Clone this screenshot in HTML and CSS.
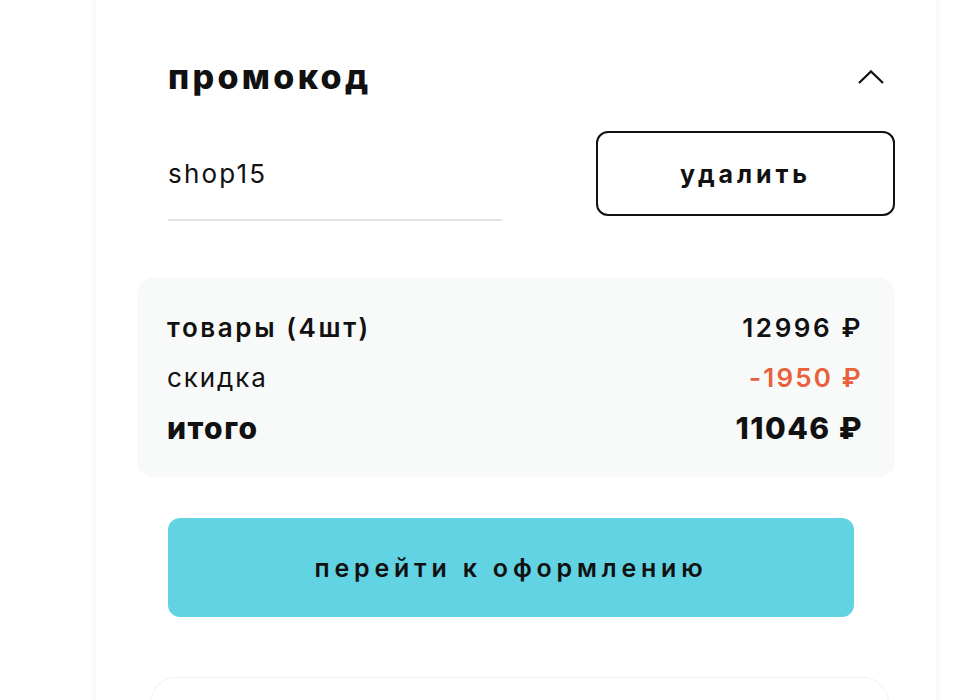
FILE: index.html
```html
<!DOCTYPE html>
<html lang="ru">
<head>
<meta charset="utf-8">
<title>Корзина</title>
<link rel="stylesheet" href="styles.css">
</head>
<body>
<div class="page">
  <section class="card">
    <div class="promo-head">
      <h2 class="promo-title">промокод</h2>
      <svg class="chevron" width="26" height="14" viewBox="0 0 26 14"><polyline points="1,13 13,1.4 25,13" fill="none" stroke="#111" stroke-width="2.2"/></svg>
    </div>
    <div class="promo-row">
      <div class="promo-input">shop15</div>
      <button class="btn-remove">удалить</button>
    </div>
    <div class="summary">
      <div class="sum-row sum-goods"><span>товары (4шт)</span><span>12996 ₽</span></div>
      <div class="sum-row sum-discount"><span>скидка</span><span class="neg">-1950 ₽</span></div>
      <div class="sum-row sum-total"><span>итого</span><span>11046 ₽</span></div>
    </div>
    <button class="btn-checkout">перейти к оформлению</button>
    <div class="next-card"></div>
  </section>
</div>
</body>
</html>
```
FILE: styles.css
```css
html, body {
  margin: 0;
  padding: 0;
  background: #ffffff;
}
body {
  font-family: Inter, "Noto Sans", "DejaVu Sans", sans-serif;
  color: #111;
  overflow: hidden;
  height: 700px;
}
.page {
  padding-left: 96px;
  width: 840px;
}
.card {
  margin-top: -40px;
  padding: 40px 41px 0 72px;
  background: #fff;
  box-shadow: 0 0 10px rgba(0, 0, 0, 0.06);
  height: 800px;
}
.promo-head {
  display: flex;
  justify-content: space-between;
  align-items: center;
  padding-right: 11px;
  height: 50px;
  margin-top: 52px;
}
.promo-title {
  margin: 0;
  font-size: 34px;
  font-weight: 800;
  letter-spacing: 3.3px;
  line-height: 50px;
}
.chevron {
  display: block;
  margin-top: 0;
}
.promo-row {
  display: flex;
  justify-content: space-between;
  align-items: flex-start;
  margin-top: 29px;
}
.promo-input {
  width: 334px;
  height: 90px;
  box-sizing: border-box;
  border-bottom: 2px solid #e3e3e3;
  font-size: 26px;
  line-height: 86px;
  letter-spacing: 2.2px;
}
.btn-remove {
  width: 299px;
  height: 85px;
  box-sizing: border-box;
  border: 2px solid #111;
  border-radius: 12px;
  background: #fff;
  font-family: inherit;
  font-size: 25px;
  font-weight: 700;
  letter-spacing: 3.9px;
  color: #111;
  padding: 0;
}
.summary {
  margin: 57px 0 0 -31px;
  width: 758px;
  height: 199px;
  box-sizing: border-box;
  padding: 25px 32px 0 30px;
  background: #f8f9f9;
  border-radius: 16px;
}
.sum-row {
  display: flex;
  justify-content: space-between;
  align-items: baseline;
  height: 50px;
  line-height: 50px;
  font-size: 26px;
}
.sum-goods {
  font-weight: 600;
  letter-spacing: 2.6px;
}
.sum-discount {
  font-weight: 400;
  letter-spacing: 1.9px;
}
.sum-discount .neg {
  color: #e8613a;
  font-weight: 600;
  letter-spacing: 2.2px;
}
.sum-total {
  font-size: 30px;
  font-weight: 800;
  letter-spacing: 1.5px;
}
.btn-checkout {
  display: block;
  margin-top: 41px;
  width: 686px;
  height: 99px;
  border: 0;
  border-radius: 12px;
  background: #62d3e3;
  font-family: inherit;
  font-size: 25px;
  font-weight: 600;
  letter-spacing: 4.8px;
  color: #111;
  padding: 0;
}
.next-card {
  margin: 60px 0 0 -18px;
  width: 737px;
  height: 100px;
  border: 1.5px solid #f2f2f2;
  border-radius: 26px;
}
```
